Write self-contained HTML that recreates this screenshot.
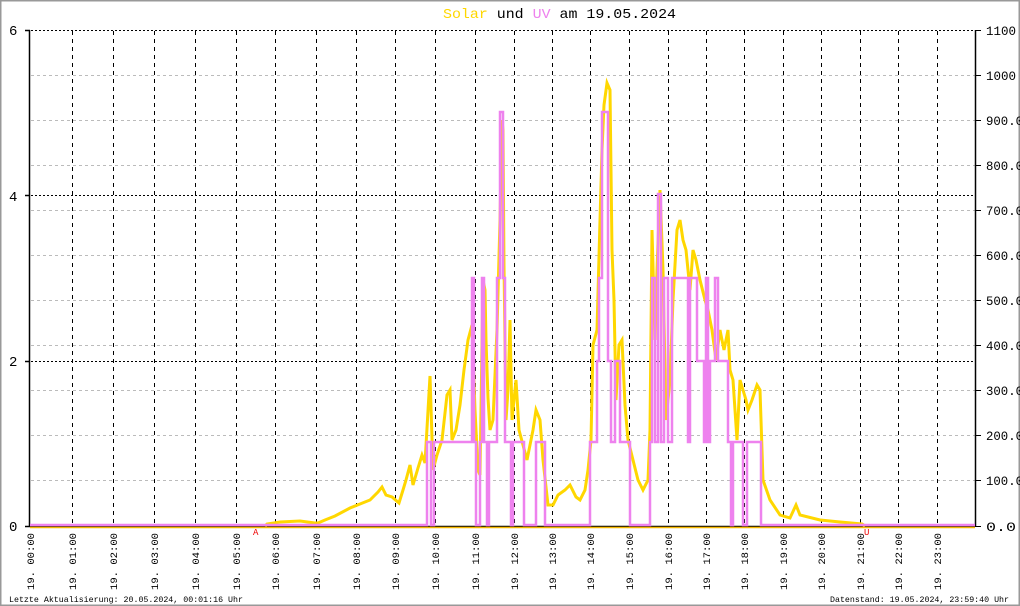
<!DOCTYPE html>
<html><head><meta charset="utf-8"><style>
html,body{margin:0;padding:0;background:#fff;}
svg{display:block;}
</style></head><body>
<svg width="1020" height="606" viewBox="0 0 1020 606" xmlns="http://www.w3.org/2000/svg" font-family="Liberation Mono, monospace">
<rect x="0.5" y="0.5" width="1019" height="605" fill="#fff" stroke="#999" stroke-width="2"/>
<!-- minor gray grid -->
<g stroke="#bbb" stroke-width="1" stroke-dasharray="3,3">
<line x1="31" y1="75.5" x2="975" y2="75.5"/><line x1="31" y1="120.5" x2="975" y2="120.5"/><line x1="31" y1="165.5" x2="975" y2="165.5"/>
<line x1="31" y1="210.5" x2="975" y2="210.5"/><line x1="31" y1="255.5" x2="975" y2="255.5"/><line x1="31" y1="300.5" x2="975" y2="300.5"/>
<line x1="31" y1="345.5" x2="975" y2="345.5"/><line x1="31" y1="390.5" x2="975" y2="390.5"/><line x1="31" y1="435.5" x2="975" y2="435.5"/>
<line x1="31" y1="480.5" x2="975" y2="480.5"/>
</g>
<!-- major dotted -->
<g stroke="#000" stroke-width="1" stroke-dasharray="2,2">
<line x1="31" y1="30.5" x2="975" y2="30.5"/><line x1="31" y1="195.5" x2="975" y2="195.5"/><line x1="31" y1="361.5" x2="975" y2="361.5"/>
</g>
<g stroke="#000" stroke-width="1" stroke-dasharray="4,4">
<line x1="72.5" y1="31" x2="72.5" y2="526"/><line x1="113.5" y1="31" x2="113.5" y2="526"/><line x1="154.5" y1="31" x2="154.5" y2="526"/>
<line x1="195.5" y1="31" x2="195.5" y2="526"/><line x1="236.5" y1="31" x2="236.5" y2="526"/><line x1="275.5" y1="31" x2="275.5" y2="526"/>
<line x1="316.5" y1="31" x2="316.5" y2="526"/><line x1="356.5" y1="31" x2="356.5" y2="526"/><line x1="395.5" y1="31" x2="395.5" y2="526"/>
<line x1="435.5" y1="31" x2="435.5" y2="526"/><line x1="475.5" y1="31" x2="475.5" y2="526"/><line x1="514.5" y1="31" x2="514.5" y2="526"/>
<line x1="552.5" y1="31" x2="552.5" y2="526"/><line x1="590.5" y1="31" x2="590.5" y2="526"/><line x1="629.5" y1="31" x2="629.5" y2="526"/>
<line x1="668.5" y1="31" x2="668.5" y2="526"/><line x1="706.5" y1="31" x2="706.5" y2="526"/><line x1="744.5" y1="31" x2="744.5" y2="526"/>
<line x1="783.5" y1="31" x2="783.5" y2="526"/><line x1="821.5" y1="31" x2="821.5" y2="526"/><line x1="860.5" y1="31" x2="860.5" y2="526"/>
<line x1="898.5" y1="31" x2="898.5" y2="526"/><line x1="937.5" y1="31" x2="937.5" y2="526"/>
</g>
<!-- axes -->
<g stroke="#000" stroke-width="1.5">
<line x1="29.5" y1="30" x2="29.5" y2="526"/><line x1="975.5" y1="30" x2="975.5" y2="526"/>
<line x1="30" y1="526.5" x2="975" y2="526.5"/>
<line x1="25" y1="30.5" x2="30" y2="30.5"/><line x1="25" y1="195.5" x2="30" y2="195.5"/><line x1="25" y1="361.5" x2="30" y2="361.5"/><line x1="25" y1="526.5" x2="30" y2="526.5"/>
</g>
<g stroke="#000" stroke-width="1">
<line x1="975" y1="30.5" x2="981" y2="30.5"/><line x1="975" y1="75.5" x2="981" y2="75.5"/><line x1="975" y1="120.5" x2="981" y2="120.5"/><line x1="975" y1="165.5" x2="981" y2="165.5"/><line x1="975" y1="210.5" x2="981" y2="210.5"/><line x1="975" y1="255.5" x2="981" y2="255.5"/><line x1="975" y1="300.5" x2="981" y2="300.5"/><line x1="975" y1="345.5" x2="981" y2="345.5"/><line x1="975" y1="390.5" x2="981" y2="390.5"/><line x1="975" y1="435.5" x2="981" y2="435.5"/><line x1="975" y1="480.5" x2="981" y2="480.5"/><line x1="975" y1="526.5" x2="981" y2="526.5"/>
</g>
<!-- solar baseline -->
<line x1="30" y1="527.5" x2="975" y2="527.5" stroke="#f5b800" stroke-width="1.5"/>
<!-- solar -->
<polyline fill="none" stroke="#ffd700" stroke-width="3" stroke-linejoin="miter" points="265,526 267,524 280,522 300,521 315,523 318,523 325,520 335,516 350,508 360,504 370,500 378,492 382,487 386,495 392,497 399,503 403,490 406,480 410,465 413,485 418,468 422,455 425,463 430,376 433,470 437,455 442,440 447,395 450,390 452,440 456,430 460,405 464,370 468,340 472,325 475,410 478,470 480,475 483,280 485,290 486,340 488,398 490,430 493,420 497,330 500,220 502,120 503,130 504,265 506,420 508,390 510,320 512,420 516,380 519,430 523,445 527,460 530,445 533,430 536,410 540,420 543,460 548,505 553,505 558,495 565,490 570,485 576,497 580,500 585,490 588,470 591,440 593,345 597,330 600,220 602,150 604,105 607,83 610,90 612,250 614,300 616,400 619,345 622,340 625,405 628,440 633,460 638,480 643,490 648,480 650,430 652,230 655,340 657,270 660,190 663,270 666,420 670,380 673,300 677,230 680,220 683,240 686,250 690,290 693,250 696,260 700,280 705,300 708,310 712,330 716,360 720,330 724,350 728,330 730,370 733,380 737,440 740,380 743,390 746,400 748,410 752,400 757,385 760,390 763,480 770,500 780,515 790,518 796,505 800,515 820,520 840,522 862,524 865,526"/>
<!-- UV -->
<polyline fill="none" stroke="#ee82ee" stroke-width="2.5" points="30,525 427,525 427,442 431,442 431,525 434,525 434,442 441,442 441,442 472,442 472,278 474,278 474,442 476,442 476,525 480,525 480,442 482,442 482,278 484,278 484,442 487,442 487,525 489,525 489,442 497,442 497,278 500,278 500,112 503,112 503,278 505,278 505,442 511,442 511,525 513,525 513,442 524,442 524,525 536,525 536,442 545,442 545,525 590,525 590,442 597,442 597,361 599,361 599,278 602,278 602,112 608,112 608,361 611,361 611,442 615,442 615,361 620,361 620,442 630,442 630,525 650,525 650,442 652,442 652,278 655,278 655,442 658,442 658,194 661,194 661,442 664,442 664,278 668,278 668,442 672,442 672,278 688,278 688,442 690,442 690,278 697,278 697,361 704,361 704,442 706,442 706,278 708,278 708,442 710,442 710,361 715,361 715,278 718,278 718,361 728,361 728,442 731,442 731,525 733,525 733,442 743,442 743,525 747,525 747,442 761,442 761,525 975,525"/>
<!-- markers -->
<text x="253" y="535" font-size="9" fill="#e00">A</text>
<text x="864" y="535" font-size="9" fill="#e00">U</text>
<!-- title -->
<text x="443" y="18" font-size="14" textLength="233" lengthAdjust="spacingAndGlyphs"><tspan fill="#ffd700">Solar</tspan> und <tspan fill="#ee82ee">UV</tspan> am 19.05.2024</text>
<!-- left labels -->
<g font-size="14" fill="#000">
<text x="9" y="35">6</text><text x="9" y="201">4</text><text x="9" y="366">2</text><text x="9" y="531">0</text>
</g>
<!-- right labels -->
<g font-size="12.5" fill="#000">
<text x="986" y="35" textLength="30" lengthAdjust="spacingAndGlyphs">1100</text>
<text x="986" y="80" textLength="30" lengthAdjust="spacingAndGlyphs">1000</text>
<text x="986" y="125" textLength="37" lengthAdjust="spacingAndGlyphs">900.0</text>
<text x="986" y="170" textLength="37" lengthAdjust="spacingAndGlyphs">800.0</text>
<text x="986" y="215" textLength="37" lengthAdjust="spacingAndGlyphs">700.0</text>
<text x="986" y="260" textLength="37" lengthAdjust="spacingAndGlyphs">600.0</text>
<text x="986" y="305" textLength="37" lengthAdjust="spacingAndGlyphs">500.0</text>
<text x="986" y="350" textLength="37" lengthAdjust="spacingAndGlyphs">400.0</text>
<text x="986" y="395" textLength="37" lengthAdjust="spacingAndGlyphs">300.0</text>
<text x="986" y="440" textLength="37" lengthAdjust="spacingAndGlyphs">200.0</text>
<text x="986" y="485" textLength="37" lengthAdjust="spacingAndGlyphs">100.0</text>
<text x="986" y="531" textLength="30" lengthAdjust="spacingAndGlyphs">0.0</text>
</g>
<!-- x labels -->
<g font-size="10.5" fill="#000">
<text transform="translate(34,590) rotate(-90)" textLength="57" lengthAdjust="spacingAndGlyphs">19. 00:00</text>
<text transform="translate(76,590) rotate(-90)" textLength="57" lengthAdjust="spacingAndGlyphs">19. 01:00</text>
<text transform="translate(117,590) rotate(-90)" textLength="57" lengthAdjust="spacingAndGlyphs">19. 02:00</text>
<text transform="translate(158,590) rotate(-90)" textLength="57" lengthAdjust="spacingAndGlyphs">19. 03:00</text>
<text transform="translate(199,590) rotate(-90)" textLength="57" lengthAdjust="spacingAndGlyphs">19. 04:00</text>
<text transform="translate(240,590) rotate(-90)" textLength="57" lengthAdjust="spacingAndGlyphs">19. 05:00</text>
<text transform="translate(279,590) rotate(-90)" textLength="57" lengthAdjust="spacingAndGlyphs">19. 06:00</text>
<text transform="translate(320,590) rotate(-90)" textLength="57" lengthAdjust="spacingAndGlyphs">19. 07:00</text>
<text transform="translate(360,590) rotate(-90)" textLength="57" lengthAdjust="spacingAndGlyphs">19. 08:00</text>
<text transform="translate(399,590) rotate(-90)" textLength="57" lengthAdjust="spacingAndGlyphs">19. 09:00</text>
<text transform="translate(439,590) rotate(-90)" textLength="57" lengthAdjust="spacingAndGlyphs">19. 10:00</text>
<text transform="translate(479,590) rotate(-90)" textLength="57" lengthAdjust="spacingAndGlyphs">19. 11:00</text>
<text transform="translate(518,590) rotate(-90)" textLength="57" lengthAdjust="spacingAndGlyphs">19. 12:00</text>
<text transform="translate(556,590) rotate(-90)" textLength="57" lengthAdjust="spacingAndGlyphs">19. 13:00</text>
<text transform="translate(594,590) rotate(-90)" textLength="57" lengthAdjust="spacingAndGlyphs">19. 14:00</text>
<text transform="translate(633,590) rotate(-90)" textLength="57" lengthAdjust="spacingAndGlyphs">19. 15:00</text>
<text transform="translate(672,590) rotate(-90)" textLength="57" lengthAdjust="spacingAndGlyphs">19. 16:00</text>
<text transform="translate(710,590) rotate(-90)" textLength="57" lengthAdjust="spacingAndGlyphs">19. 17:00</text>
<text transform="translate(748,590) rotate(-90)" textLength="57" lengthAdjust="spacingAndGlyphs">19. 18:00</text>
<text transform="translate(787,590) rotate(-90)" textLength="57" lengthAdjust="spacingAndGlyphs">19. 19:00</text>
<text transform="translate(825,590) rotate(-90)" textLength="57" lengthAdjust="spacingAndGlyphs">19. 20:00</text>
<text transform="translate(864,590) rotate(-90)" textLength="57" lengthAdjust="spacingAndGlyphs">19. 21:00</text>
<text transform="translate(902,590) rotate(-90)" textLength="57" lengthAdjust="spacingAndGlyphs">19. 22:00</text>
<text transform="translate(941,590) rotate(-90)" textLength="57" lengthAdjust="spacingAndGlyphs">19. 23:00</text>
</g>
<!-- footer -->
<g font-size="8.5" fill="#000">
<text x="9" y="602" textLength="234" lengthAdjust="spacingAndGlyphs">Letzte Aktualisierung: 20.05.2024, 00:01:16 Uhr</text>
<text x="830" y="602" textLength="179" lengthAdjust="spacingAndGlyphs">Datenstand: 19.05.2024, 23:59:40 Uhr</text>
</g>
</svg>
</body></html>
